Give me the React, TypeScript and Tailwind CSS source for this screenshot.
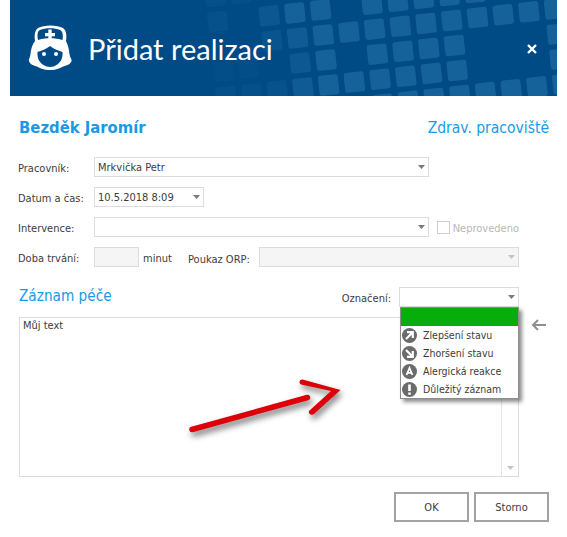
import React from "react";

const U = [25.7, -2.9];
const V = [2.7, 25];
const O = [313.3, 25];
const rows: [number, number[], number][] = [
  [-1, [-1, 0, 2, 3, 4, 5, 6], 1],
  [0, [0, 1, 2, 3, 4, 5, 6, 7, 8, 9], 1],
  [1, [0, 2, 3, 4, 5, 9], 1],
  [2, [0, 1, 2, 3, 4, 5, 9], 1],
  [3, [2, 3, 4, 5, 6, 7, 8, 9], 1],
  [-2, [-4, -3], 0.25],
  [-1, [-4], 0.3],
  [-1, [-2], 0.55],
  [0, [-2], 0.45],
  [0, [-1], 0.75],
  [1, [-4, -3], 0.15],
  [1, [-1], 0.6],
  [2, [-4, -3], 0.25],
  [2, [-2], 0.35],
  [2, [-1], 0.7],
];

function Pattern() {
  return (
    <svg className="absolute inset-0" width="547" height="96" viewBox="10 0 547 96" aria-hidden="true">
      {rows.flatMap(([j, is, op]) =>
        is.map((i) => {
          const x = O[0] + i * U[0] + j * V[0];
          const y = O[1] + i * U[1] + j * V[1];
          return (
            <rect
              key={`${i}:${j}`}
              x={x}
              y={y}
              width="20"
              height="20"
              rx="2.5"
              fill="#15629b"
              opacity={op}
              transform={`rotate(-6 ${x + 10} ${y + 10})`}
            />
          );
        })
      )}
    </svg>
  );
}

function Nurse() {
  return (
    <svg width="44" height="48" viewBox="28 25 44 48" className="shrink-0" aria-hidden="true">
      <path
        fill="#fff"
        d="M38 29 C44 25.5 57 25.5 63 29 C66 31 67 36 66 42 C68 46 69 50 69.5 55 C70 59 72 60 71.5 62 C71 65 66 67 63 67.5 C59 70 54 71.5 50 71 C46 71.5 41 70 37 67.5 C34 67 29.5 65 29 62 C28.5 60 30 59 30.5 55 C31 50 32 46 35 42 C34 36 35 31 38 29 Z"
      />
      <path
        fill="#004a85"
        d="M40 31 C45 28.5 55 28.5 60 31 C62.5 32 63.5 36 62.5 41 C56 38.5 44 38.5 38 41 C37 36 37.5 32 40 31 Z"
      />
      <path fill="#fff" d="M48.3 30.5 H51.7 V34 H55 V37.2 H51.7 V40.5 H48.3 V37.2 H45 V34 H48.3 Z" />
      <path
        fill="#004a85"
        d="M37.5 53 C41 52 46.5 50 50 47 C53.5 50 59 52 62.5 53 C63 60 60 64 56.5 66 C53 68.5 47 68.5 43.5 66 C40 64 37 60 37.5 53 Z"
      />
      <circle cx="44" cy="55" r="2" fill="#fff" />
      <circle cx="56" cy="55" r="2" fill="#fff" />
    </svg>
  );
}

function Caret({ muted = false }: { muted?: boolean }) {
  return (
    <svg width="7" height="4" viewBox="0 0 7 4" className="shrink-0" aria-hidden="true">
      <path d="M0 0 H7 L3.5 4 Z" fill={muted ? "#c4c4c4" : "#7a7a7a"} />
    </svg>
  );
}

function Field({ className, children, muted }: { className: string; children?: React.ReactNode; muted?: boolean }) {
  return (
    <div className={`flex h-5 shrink-0 items-center border border-[#dcdcdc] pr-[3px] pl-[3px] ${className}`}>
      <span className="flex-1 whitespace-nowrap">{children}</span>
      <Caret muted={muted} />
    </div>
  );
}

function ItemIcon({ kind }: { kind: "up" | "down" | "a" | "i" }) {
  return (
    <svg width="15" height="15" viewBox="0 0 15 15" className="shrink-0" aria-hidden="true">
      <circle cx="7.5" cy="7.5" r="7.5" fill="#6b6b6b" />
      {kind === "up" && <path d="M4 11 L10 5 M5 4.2 H10.8 V10" stroke="#fff" strokeWidth="2.2" fill="none" />}
      {kind === "down" && <path d="M4 4 L10 10 M10.8 5 V10.8 H5" stroke="#fff" strokeWidth="2.2" fill="none" />}
      {kind === "a" && <path d="M4.5 11 L7.5 4 L10.5 11 M5.6 8.8 H9.4" stroke="#fff" strokeWidth="1.8" fill="none" />}
      {kind === "i" && <path d="M7.5 2.5 V9 M7.5 10.5 V12.7" stroke="#fff" strokeWidth="2.6" fill="none" />}
    </svg>
  );
}

const items: { kind: "up" | "down" | "a" | "i"; label: string }[] = [
  { kind: "up", label: "Zlepšení stavu" },
  { kind: "down", label: "Zhoršení stavu" },
  { kind: "a", label: "Alergická reakce" },
  { kind: "i", label: "Důležitý záznam" },
];

export default function App() {
  return (
    <div className="relative h-[537px] w-[567px] overflow-hidden bg-white font-['DejaVu_Sans_Condensed','Noto_Sans',sans-serif] text-[11px] leading-none text-[#3c3c3c]">
      <header className="relative mx-[10px] flex h-[96px] items-center overflow-hidden bg-[#004a85] pr-[20px] pl-[18px] text-white">
        <Pattern />
        <div className="relative flex items-center gap-[16px]">
          <Nurse />
          <h1 className="font-['Lato',sans-serif] text-[29px] font-normal">Přidat realizaci</h1>
        </div>
        <svg width="10" height="10" viewBox="0 0 10 10" className="relative mt-[1px] ml-auto" aria-hidden="true">
          <path d="M1 1 L9 9 M9 1 L1 9" stroke="#fff" strokeWidth="2.4" />
        </svg>
      </header>

      <main className="px-[18px] pt-[22px]">
        <div className="flex items-center justify-between leading-[20px] text-[#1a9ae6]">
          <span className="ml-[1px] text-[16.5px] font-bold">Bezděk Jaromír</span>
          <span className="text-[15.5px]">Zdrav. pracoviště</span>
        </div>

        <div className="mt-[19px] flex w-[501px] flex-col gap-[10px]">
          <div className="flex items-center">
            <label className="w-[76px] pt-[2px]">Pracovník:</label>
            <Field className="w-[335px]">Mrkvička Petr</Field>
          </div>
          <div className="flex items-center">
            <label className="w-[76px] pt-[2px]">Datum a čas:</label>
            <Field className="w-[110px]">10.5.2018 8:09</Field>
          </div>
          <div className="flex items-center">
            <label className="w-[76px] pt-[2px]">Intervence:</label>
            <Field className="w-[335px]" />
            <span className="ml-[8px] h-[13px] w-[13px] shrink-0 border border-[#cfcfcf]" />
            <span className="ml-[3px] whitespace-nowrap pt-[2px] text-[#b8b8b8]">Neprovedeno</span>
          </div>
          <div className="flex items-center">
            <label className="w-[76px] pt-[2px]">Doba trvání:</label>
            <span className="h-5 w-[45px] border border-[#dcdcdc] bg-[#f5f5f5]" />
            <span className="ml-[4px] w-[45px] pt-[2px]">minut</span>
            <label className="w-[71px] pt-[4px]">Poukaz ORP:</label>
            <Field className="w-[260px] bg-[#f5f5f5]" muted />
          </div>
        </div>

        <div className="mt-[20px] ml-[1px] flex w-[500px] items-center">
          <h2 className="flex-1 text-[15.2px] font-normal text-[#1a9ae6]">Záznam péče</h2>
          <label className="mr-[8px] pt-[2px]">Označení:</label>
          <Field className="w-[120px]" />
        </div>

        <div className="mt-[10px] ml-[1px] flex items-start gap-[12px]">
          <div className="flex h-[160px] w-[500px] border border-[#dcdcdc]">
            <div className="flex-1 px-[3px] py-[2px]">Můj text</div>
            <div className="flex w-[17px] flex-col items-center justify-end border-l border-[#e4e4e4] pb-[6px]">
              <Caret muted />
            </div>
          </div>
          <svg width="16" height="12" viewBox="0 0 16 12" className="mt-[2px]" aria-hidden="true">
            <path d="M15 6 H2 M7 1 L2 6 L7 11" stroke="#8f8f8f" strokeWidth="2" fill="none" />
          </svg>
        </div>

        <div className="mt-[15px] flex justify-end gap-[5px]">
          <button className="h-[30px] w-[75px] border-2 border-[#a3a3a3] bg-white">OK</button>
          <button className="h-[30px] w-[75px] border-2 border-[#a3a3a3] bg-white">Storno</button>
        </div>
      </main>

      <ul className="absolute top-[307px] left-[400px] w-[119px] border border-[#8c8c8c] bg-white text-[10.5px] shadow-[3px_3px_4px_rgba(0,0,0,0.45)]">
        <li className="h-[18px] bg-[#06ad0b]" />
        {items.map((it) => (
          <li key={it.label} className="flex h-[18px] items-center gap-[6px] pl-[1px]">
            <ItemIcon kind={it.kind} />
            <span>{it.label}</span>
          </li>
        ))}
      </ul>

      <svg
        width="567"
        height="537"
        viewBox="0 0 567 537"
        className="pointer-events-none absolute inset-0 drop-shadow-[2px_4px_3px_rgba(0,0,0,0.55)]"
        aria-hidden="true"
      >
        <path d="M192 429.5 L307.5 397.5" stroke="#dd0008" strokeWidth="5.5" strokeLinecap="round" fill="none" />
        <path
          d="M302.5 379.5 L340.5 390 L314 414 C312 416 308 414 309 411 L331 391 L301 384.5 C298.5 383 299.5 379 302.5 379.5 Z"
          fill="#dd0008"
        />
      </svg>
    </div>
  );
}
